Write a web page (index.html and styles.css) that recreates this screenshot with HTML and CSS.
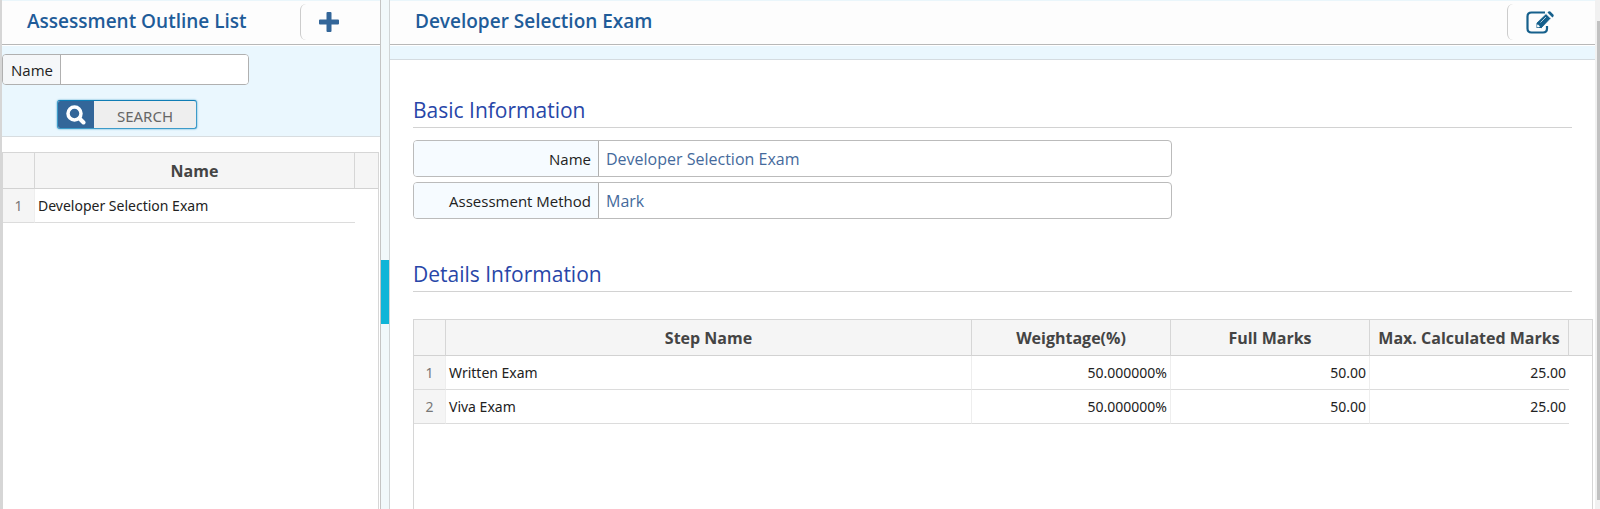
FILE: index.html
```
<!DOCTYPE html>
<html lang="en">
<head>
  <meta charset="UTF-8">
  <meta name="viewport" content="width=device-width, initial-scale=1.0">
  <title>Assessment Outline</title>
  <link rel="stylesheet" href="styles.css">
</head>
<body>
  <div class="layout">
    <aside class="sidebar">
      <header class="panel-header">
        <h1>Assessment Outline List</h1>
        <button type="button" class="header-btn" aria-label="Add">
          <svg width="20" height="20" viewBox="0 0 20 20"><path d="M8.500 0h3q1 0 1 1v6.500h6.500q1 0 1 1v3q0 1-1 1h-6.500V19q0 1-1 1h-3q-1 0-1-1v-6.500H1q-1 0-1-1v-3q0-1 1-1h6.500V1q0-1 1-1z" fill="#336699"/></svg>
        </button>
      </header>

      <form class="search">
        <div class="search-field">
          <label for="name">Name</label>
          <input type="text" id="name">
        </div>
        <button type="button" class="search-btn">
          <span class="search-icon">
            <svg width="20" height="20" viewBox="0 0 20 20" fill="none" stroke="#fff"><circle cx="8.500" cy="8.500" r="6.500" stroke-width="3.500"/><path d="M13.500 13.500l4 4" stroke-width="4" stroke-linecap="round"/></svg>
          </span>
          <span class="search-text">SEARCH</span>
        </button>
      </form>

      <div class="grid grid-side">
        <table>
          <colgroup><col class="col-no"><col><col class="col-end"></colgroup>
          <thead>
            <tr><th></th><th>Name</th><th></th></tr>
          </thead>
          <tbody>
            <tr><td class="no">1</td><td>Developer Selection Exam</td><td class="end"></td></tr>
          </tbody>
        </table>
      </div>
    </aside>

    <div class="splitter"><div class="splitter-handle"></div></div>

    <main class="content">
      <header class="panel-header">
        <h1>Developer Selection Exam</h1>
        <button type="button" class="header-btn edit-btn" aria-label="Edit">
          <svg width="28" height="23" viewBox="0 0 28 23">
            <path d="M19 1.500H5.500Q1.500 1.500 1.500 5.500v12q0 4 4 4h11.500q4 0 4-4V15" fill="none" stroke="#16608c" stroke-width="2.200"/>
            <path d="M20 2.500l5 5L15.500 17.500H10V12z" fill="#16608c" stroke="#fdfdfd" stroke-width="1"/>
            <path d="M21.500 1.500l1-1q1-.6 1.800.1l3 3q.8.900.1 1.800l-1 1z" fill="#16608c"/>
            <path d="M11.800 13.200l2.200 2.200-1 .8h-1.900v-1.900z" fill="#fdfdfd"/>
            <path d="M14.500 11.500l5.500-5.500" stroke="#fdfdfd" stroke-width=".7"/>
          </svg>
        </button>
      </header>
      <div class="strip"></div>

      <section class="basic">
        <h2>Basic Information</h2>
        <dl class="fields">
          <div class="field"><dt>Name</dt><dd>Developer Selection Exam</dd></div>
          <div class="field"><dt>Assessment Method</dt><dd>Mark</dd></div>
        </dl>
      </section>

      <section class="details">
        <h2>Details Information</h2>
        <div class="grid grid-main">
          <table>
            <colgroup><col class="col-no"><col><col class="col-num"><col class="col-num"><col class="col-num"><col class="col-end"></colgroup>
            <thead>
              <tr><th></th><th>Step Name</th><th>Weightage(%)</th><th>Full Marks</th><th>Max. Calculated Marks</th><th></th></tr>
            </thead>
            <tbody>
              <tr><td class="no">1</td><td>Written Exam</td><td class="num">50.000000%</td><td class="num">50.00</td><td class="num">25.00</td><td class="end"></td></tr>
              <tr><td class="no">2</td><td>Viva Exam</td><td class="num">50.000000%</td><td class="num">50.00</td><td class="num">25.00</td><td class="end"></td></tr>
            </tbody>
          </table>
        </div>
      </section>
    </main>

    <div class="scrollbar"><div class="scrollbar-thumb"></div></div>
  </div>
</body>
</html>
```
FILE: styles.css
```
* {
  box-sizing: border-box;
}

body {
  margin: 0;
  font-family: "Open Sans", "Noto Sans", sans-serif;
  font-size: 15px;
  color: #222;
  background: #fff;
}

h1, h2, dl, dd {
  margin: 0;
}

button, input {
  font-family: inherit;
}

.layout {
  display: flex;
  height: 100vh;
  overflow: hidden;
}

.sidebar {
  display: flex;
  flex-direction: column;
  width: 381px;
  flex-shrink: 0;
  border-left: 2px solid #d6d6d6;
  border-right: 1px solid #c4c4c4;
}

.panel-header {
  display: flex;
  align-items: flex-start;
  justify-content: space-between;
  height: 45px;
  flex-shrink: 0;
  padding-left: 25px;
  background: #fdfdfd;
  border-top: 1px solid #eaf6fb;
  border-bottom: 1px solid #b8b8b8;
}

.panel-header h1 {
  font-size: 19px;
  line-height: 40px;
  font-weight: 600;
  color: #1f5c99;
}

.header-btn {
  display: flex;
  align-items: center;
  width: 80px;
  height: 36px;
  margin-top: 3px;
  padding: 0 0 0 18px;
  background: none;
  border: 0;
  border-left: 1px solid #ccc;
  border-radius: 6px 0 0 6px;
  cursor: pointer;
}

.edit-btn {
  width: 88px;
}

/* search box */
.search {
  height: 92px;
  padding-top: 8px;
  background: #eaf7fe;
  border-top: 1px solid #fff;
  border-bottom: 1px solid #d8dde0;
}

.search-field {
  display: flex;
  width: 247px;
  height: 31px;
  background: #fff;
  border: 1px solid #b0b0b0;
  border-radius: 4px;
  overflow: hidden;
}

.search-field label {
  width: 58px;
  padding-right: 7px;
  line-height: 31px;
  font-size: 15px;
  text-align: right;
  background: #f5f7f9;
  border-right: 1px solid #b0b0b0;
}

.search-field input {
  flex: 1;
  min-width: 0;
  border: 0;
  outline: 0;
}

.search-btn {
  display: flex;
  width: 140px;
  height: 29px;
  margin: 15px 0 0 55px;
  padding: 0;
  background: #eee;
  border: 1px solid #3d9bc9;
  border-top-color: #0f7db5;
  border-radius: 3px;
  box-shadow: 0 0 2px #3d9bc9;
  overflow: hidden;
  cursor: pointer;
}

.search-icon {
  display: flex;
  align-items: center;
  justify-content: center;
  width: 36px;
  height: 27px;
  background: #336699;
}

.search-text {
  flex: 1;
  line-height: 31px;
  font-family: "Noto Sans", sans-serif;
  font-size: 15px;
  color: #666;
}

/* grids */
.grid {
  border: 1px solid #d6d6d6;
  border-bottom: 0;
}

.grid-side {
  flex: 1;
  margin: 15px 1px 0 0;
}

table {
  width: 100%;
  table-layout: fixed;
  border-collapse: separate;
  border-spacing: 0;
}

.col-no {
  width: 32px;
}

.col-num {
  width: 199px;
}

.col-end {
  width: 23px;
}

th {
  height: 36px;
  padding: 0;
  font-size: 16px;
  line-height: 20px;
  font-weight: 700;
  color: #444;
  background: #f5f5f5;
  border-right: 1px solid #d6d6d6;
  border-bottom: 1px solid #d2d2d2;
  white-space: nowrap;
}

th:last-child {
  border-right: 0;
}

td {
  height: 34px;
  padding: 0 3px;
  font-family: "Noto Sans", sans-serif;
  font-size: 14px;
  line-height: 20px;
  border-right: 1px solid #eee;
  border-bottom: 1px solid #dcdcdc;
  white-space: nowrap;
}

td.no {
  padding: 0;
  text-align: center;
  color: #777;
  background: #f5f5f5;
}

td.num {
  text-align: right;
}

td.end {
  border: 0;
}

td:nth-last-child(2) {
  border-right: 0;
}

/* splitter */
.splitter {
  display: flex;
  align-items: center;
  width: 9px;
  flex-shrink: 0;
  padding-top: 74px;
  background: #f1f8fb;
  border-right: 1px solid #d0d4d6;
}

.splitter-handle {
  width: 8px;
  height: 64px;
  background: #11b5d8;
}

/* right panel */
.content {
  display: flex;
  flex-direction: column;
  flex: 1;
  min-width: 0;
}

.strip {
  height: 15px;
  flex-shrink: 0;
  background: #eaf7fe;
  border-top: 1px solid #fff;
  border-bottom: 1px solid #d4dbe0;
}

.basic {
  padding: 32px 23px 0;
}

.details {
  display: flex;
  flex-direction: column;
  flex: 1;
  padding: 37px 0 0 23px;
}

h2 {
  height: 36px;
  margin-right: 23px;
  font-size: 21px;
  line-height: 36px;
  font-weight: 400;
  color: #2846a8;
  border-bottom: 1px solid #d2d2d2;
}

.basic h2 {
  margin-right: 0;
}

.fields {
  display: flex;
  flex-direction: column;
  gap: 5px;
  width: 65.5%;
  margin-top: 12px;
}

.field {
  display: flex;
  height: 37px;
  line-height: 36px;
  border: 1px solid #bbb;
  border-radius: 4px;
  overflow: hidden;
}

.field dt {
  width: 185px;
  padding-right: 7px;
  text-align: right;
  background: #f6fbff;
  border-right: 1px solid #b0b0b0;
}

.field dd {
  padding-left: 7px;
  font-size: 16px;
  color: #456a9c;
}

.grid-main {
  flex: 1;
  margin: 27px 2px 0 0;
}

/* scrollbar */
.scrollbar {
  width: 5px;
  flex-shrink: 0;
  padding: 21px 0 9px 2px;
  background: #f1f1f1;
}

.scrollbar-thumb {
  height: 100%;
  background: #c1c1c1;
}
```
